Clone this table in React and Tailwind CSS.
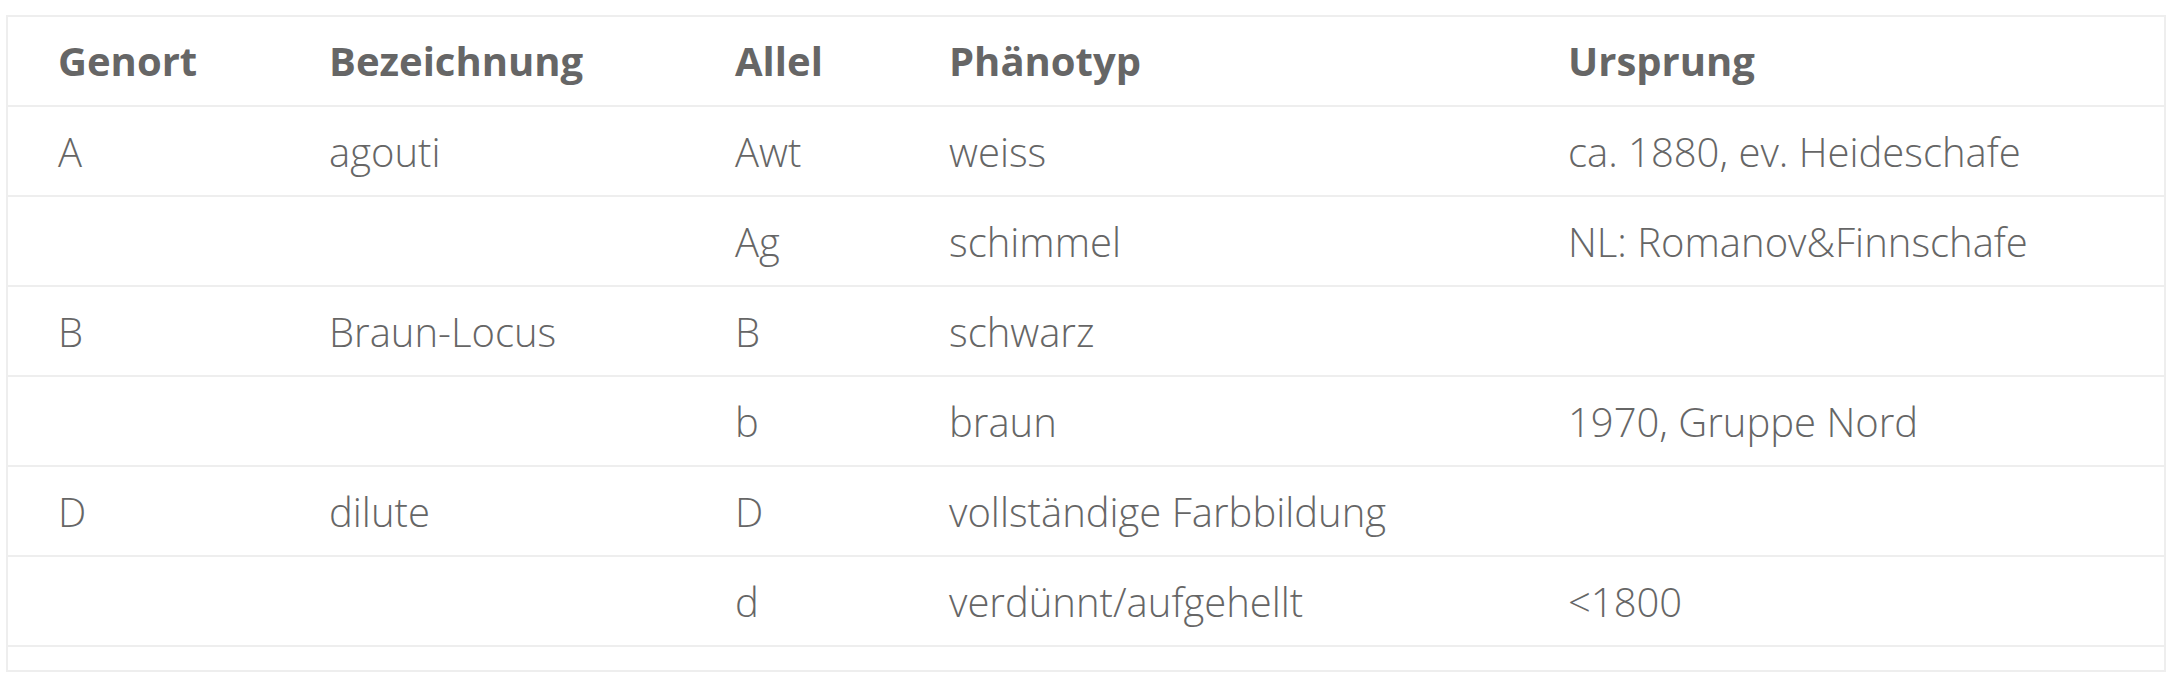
const rows = [
  ["A", "agouti", "Awt", "weiss", "ca. 1880, ev. Heideschafe"],
  ["", "", "Ag", "schimmel", "NL: Romanov&Finnschafe"],
  ["B", "Braun-Locus", "B", "schwarz", ""],
  ["", "", "b", "braun", "1970, Gruppe Nord"],
  ["D", "dilute", "D", "vollständige Farbbildung", ""],
  ["", "", "d", "verdünnt/aufgehellt", "<1800"],
];

const heads = ["Genort", "Bezeichnung", "Allel", "Phänotyp", "Ursprung"];

export default function App() {
  return (
    <div className="bg-white w-[2176px] h-[688px] pt-[15px] pl-[6px] font-['Open_Sans',sans-serif] text-[#666666]">
      <table className="w-[2160px] border-collapse border-2 border-[#eeeeee] table-fixed">
        <colgroup>
          <col className="w-[272px]" />
          <col className="w-[406px]" />
          <col className="w-[214px]" />
          <col className="w-[619px]" />
          <col />
        </colgroup>
        <thead>
          <tr className="h-[90px]">
            {heads.map((h) => (
              <th key={h} className="text-left pl-[50px] text-[40px] leading-none font-bold align-middle">{h}</th>
            ))}
          </tr>
        </thead>
        <tbody>
          {rows.map((r, i) => (
            <tr key={i} className="h-[90px] border-t-2 border-[#eeeeee]">
              {r.map((c, j) => (
                <td key={j} className="pl-[50px] pt-[2px] text-[40px] leading-none font-light align-middle whitespace-nowrap">{c}</td>
              ))}
            </tr>
          ))}
          <tr className="h-[25px] border-t-2 border-[#eeeeee]">
            <td colSpan={5}></td>
          </tr>
        </tbody>
      </table>
    </div>
  );
}
